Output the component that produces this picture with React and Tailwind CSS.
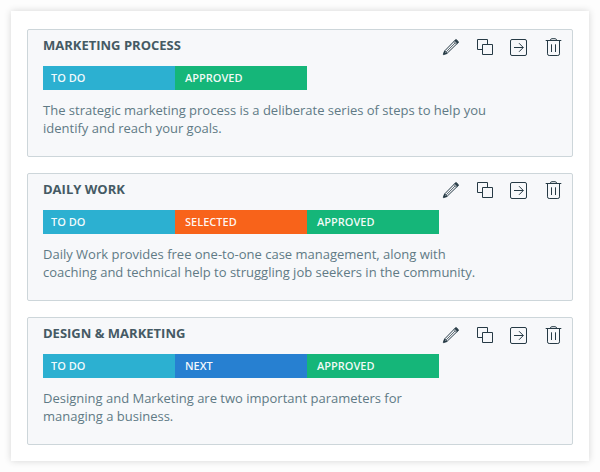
const TODO = { label: 'TO DO', tone: 'bg-[#2cb0d1]' }
const APPROVED = { label: 'APPROVED', tone: 'bg-[#15b679]' }

const boards = [
  {
    title: 'MARKETING PROCESS',
    stages: [TODO, APPROVED],
    lines: ['The strategic marketing process is a deliberate series of steps to help you', 'identify and reach your goals.'],
  },
  {
    title: 'DAILY WORK',
    raised: true,
    stages: [TODO, { label: 'SELECTED', tone: 'bg-[#f8631a]' }, APPROVED],
    lines: ['Daily Work provides free one-to-one case management, along with', 'coaching and technical help to struggling job seekers in the community.'],
  },
  {
    title: 'DESIGN & MARKETING',
    stages: [TODO, { label: 'NEXT', tone: 'bg-[#2780d1]' }, APPROVED],
    lines: ['Designing and Marketing are two important parameters for', 'managing a business.'],
  },
]

function Icon({ label, children }) {
  return (
    <button type="button" aria-label={label} className="size-[18px]">
      <svg viewBox="0 0 18 18" className="block size-[18px]" fill="none" stroke="#263a45" strokeWidth="1">
        {children}
      </svg>
    </button>
  )
}

function Actions({ raised }) {
  return (
    <div className={`flex gap-4 ${raised ? 'pt-[7px]' : 'pt-2'}`}>
      <Icon label="Edit">
        <path d="M1.7 16.2 2.8 12.8 13.2 2.2Q14 1.4 14.8 2.2L15.9 3.2Q16.6 4 15.9 4.8L5.2 15.2Z" />
        <path d="M2.8 12.8 5.2 15.2M12 3.6 14.6 6.2M4.2 13.9 13.2 4.9" strokeWidth="0.8" />
        <path d="M12.6 2.8 13.9 1.5 16.6 4.2 15.3 5.5ZM1.2 16.8 2.2 13.4 4.7 15.8Z" fill="#263a45" strokeWidth="0.5" />
      </Icon>
      <Icon label="Duplicate">
        <path d="M6.5 11.5H1.5V1.5H11.5V6.5" />
        <path d="M6.5 6.5H16.5V16.5H6.5Z" />
      </Icon>
      <Icon label="Move">
        <rect x="0.5" y="1.5" width="16" height="16" rx="1.5" />
        <path d="M4 9.5H13.2M9 5.2 13.3 9.5 9 13.8" />
      </Icon>
      <Icon label="Delete">
        <path d="M1.7 2.5H17.3M6.3 2.5Q6.5 .7 7.8 .7H11.2Q12.5 .7 12.7 2.5" />
        <path d="M3.5 2.5V15.8Q3.5 17.5 5.2 17.5H13.8Q15.5 17.5 15.5 15.8V2.5M7.5 6.3V14M11.5 6.3V14" />
      </Icon>
    </div>
  )
}

function Board({ title, raised, stages, lines }) {
  return (
    <section className="h-32 rounded-[2px] border border-[#cdd6da] bg-[#f7f8fa] pr-2.5 pl-[15px]">
      <div className="flex h-9 justify-between">
        <h2 className="pt-[7px] text-[13px] leading-4 font-bold text-[#455a64]">{title}</h2>
        <Actions raised={raised} />
      </div>
      <div className="flex h-6">
        {stages.map(({ label, tone }, i) => (
          <div key={label} className={`flex w-[132px] items-center text-[11px] font-semibold text-white/95 ${i === 0 ? 'pl-2' : 'pl-2.5'} ${tone}`}>
            {label}
          </div>
        ))}
      </div>
      <p className="mt-[11px] text-[13px] leading-[18px] text-[#607a85]">
        {lines.map((line) => (
          <span key={line} className="block whitespace-nowrap">{line}</span>
        ))}
      </p>
    </section>
  )
}

export default function App() {
  return (
    <div className="h-[472px] w-[600px] overflow-hidden bg-[#fdfdfd] p-[11px] font-['Open_Sans',sans-serif]">
      <main className="flex h-[450px] flex-col gap-4 bg-white px-4 pt-[18px] shadow-[0_0_7px_rgba(0,0,0,0.16)]">
        {boards.map((board) => (
          <Board key={board.title} {...board} />
        ))}
      </main>
    </div>
  )
}
